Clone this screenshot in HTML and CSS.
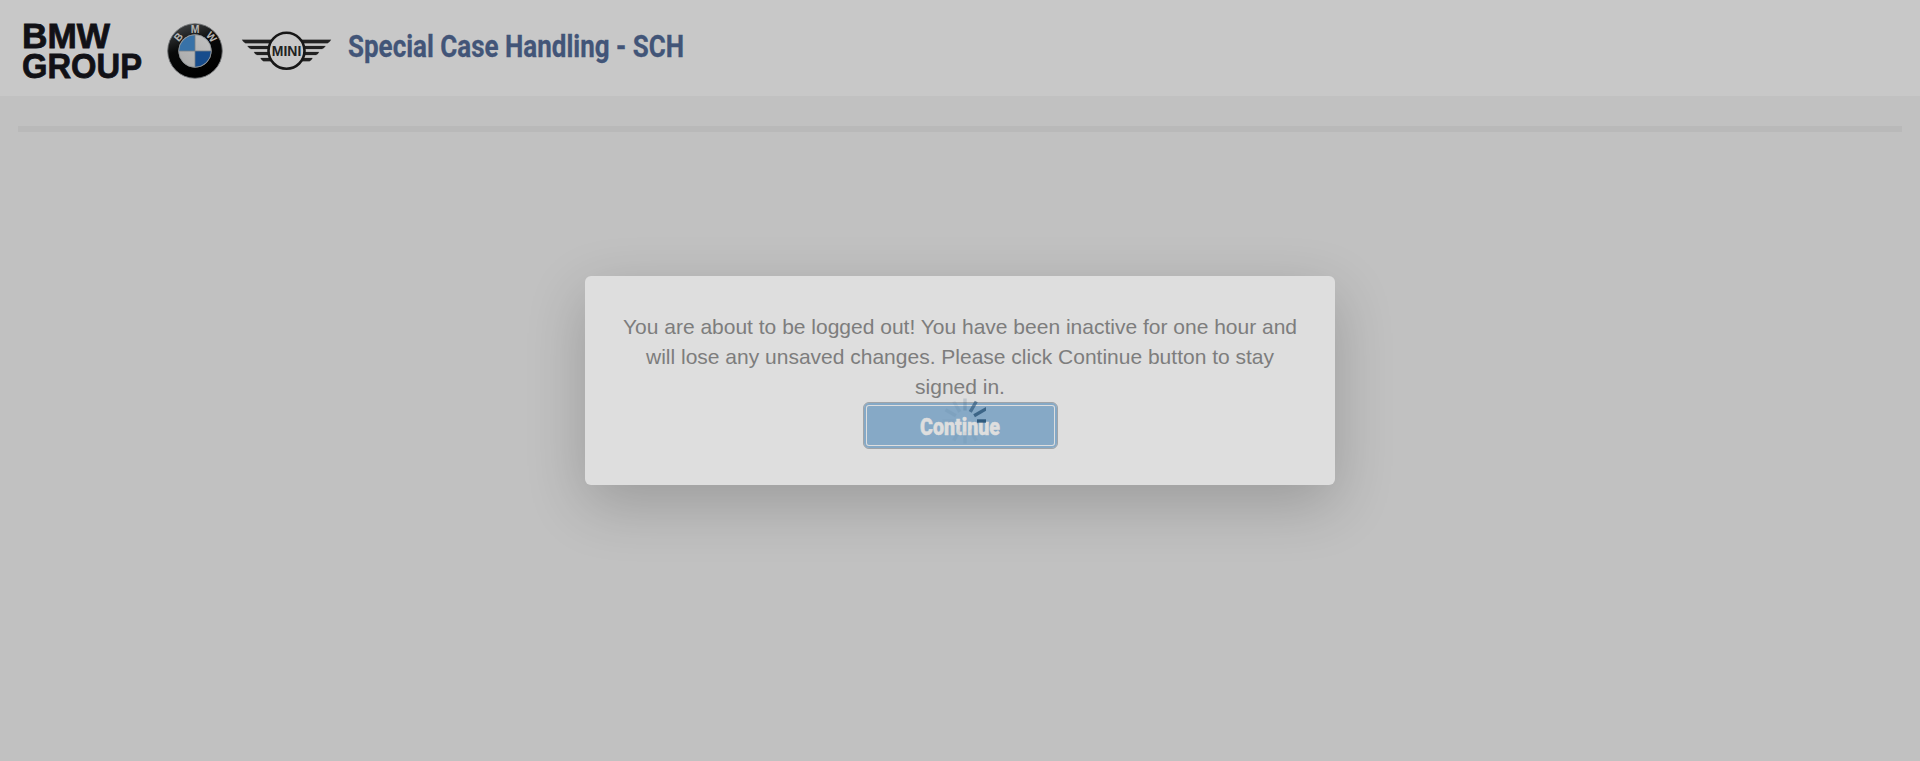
FILE: index.html
```html
<!DOCTYPE html>
<html lang="en">
<head>
<meta charset="utf-8">
<title>Special Case Handling - SCH</title>
<link rel="stylesheet" href="styles.css">
</head>
<body>
<header class="header">
  <svg class="logo-group" width="119" height="57" viewBox="0 0 119 57">
    <text x="-1" y="25" textLength="88" lengthAdjust="spacingAndGlyphs">BMW</text>
    <text x="-1" y="55" textLength="120" lengthAdjust="spacingAndGlyphs">GROUP</text>
  </svg>
  <svg class="logo-bmw" width="56" height="56" viewBox="0 0 56 56">
    <defs>
      <linearGradient id="ring" x1="0" y1="0" x2=".35" y2="1"><stop offset="0" stop-color="#4b4e50"/><stop offset=".5" stop-color="#080909"/><stop offset="1" stop-color="#000"/></linearGradient>
      <linearGradient id="silver" x1="0" y1="1" x2="1" y2="0"><stop offset="0" stop-color="#aaa"/><stop offset="1" stop-color="#c2c2c2"/></linearGradient>
    </defs>
    <circle cx="28" cy="28" r="27.3" fill="url(#ring)" stroke="#737577" stroke-width=".9"/>
    <circle cx="28" cy="28" r="16.5" fill="url(#silver)"/>
    <path d="M28 28V12A16 16 0 0 0 12 28Z" fill="#3872a8"/>
    <path d="M28 28H44A16 16 0 0 1 28 44Z" fill="#174c8c"/>
    <path d="M28 12V44M12 28H44" stroke="#777f85" stroke-width=".8"/>
    <circle cx="28" cy="28" r="16.3" fill="none" stroke="#8a9095" stroke-width=".8"/>
    <g class="ring-letters"><text x="28" y="10" transform="rotate(-50 28 28)">B</text><text x="28" y="10">M</text><text x="28" y="10" transform="rotate(50 28 28)">W</text></g>
  </svg>
  <svg class="logo-mini" width="90" height="42" viewBox="0 0 90 42">
    <g fill="#222" stroke="#222" stroke-width=".2">
      <path d="M0 1.800H31L28.500 5.200H3.500Q1.500 4.500 0 1.800ZM5.500 8H28L27 11H9Q7 10.300 5.500 8ZM12 14H27V17H15Q13 16.300 12 14ZM18.500 20H28L29 23.200H21.500Q19.500 22.500 18.500 20Z"/>
      <path d="M89 1.800H58L60.500 5.200H85.500Q87.500 4.500 89 1.800ZM83.500 8H61L62 11H80Q82 10.300 83.500 8ZM77 14H62V17H74Q76 16.300 77 14ZM70.500 20H61L60 23.200H67.500Q69.500 22.500 70.500 20Z"/>
    </g>
    <circle cx="44.500" cy="12.800" r="18" fill="#c8c8c8" stroke="#171717" stroke-width="2.600"/>
    <text x="29.800" y="18" textLength="29.500" lengthAdjust="spacingAndGlyphs">MINI</text>
  </svg>
  <svg class="title" width="340" height="48" viewBox="0 0 340 48"><text x="0" y="33.700" textLength="336" lengthAdjust="spacingAndGlyphs">Special Case Handling - SCH</text></svg>
</header>
<main class="content">
  <div class="divider"></div>
</main>
<div class="overlay">
  <section class="dialog">
    <p class="message">You are about to be logged out! You have been inactive for one hour and<br>will lose any unsaved changes. Please click Continue button to stay<br>signed in.</p>
    <button class="continue"><svg class="label" width="82" height="30" viewBox="0 0 82 30"><text x="1" y="23.500" textLength="80" lengthAdjust="spacingAndGlyphs">Continue</text></svg></button>
    <svg class="spinner" width="44" height="46" viewBox="-23 -23 44 46">
      <g stroke="#244f73" stroke-width="3.400">
        <path d="M0 -10.500V-22.500" opacity=".17"/>
        <path d="M0 -10.500V-22.500" transform="rotate(30)" opacity=".6"/>
        <path d="M0 -10.500V-25.500" transform="rotate(60)" opacity=".75"/>
        <path d="M0 -12V-22.500" transform="rotate(90)" opacity=".88"/>
        <path d="M0 -10.500V-22.500" transform="rotate(150)" opacity=".05"/>
        <path d="M0 -10.500V-22.500" transform="rotate(180)" opacity=".06"/>
        <path d="M0 -10.500V-22.500" transform="rotate(210)" opacity=".05"/>
        <path d="M0 -10.500V-22.500" transform="rotate(270)" opacity=".03"/>
        <path d="M0 -10.500V-22.500" transform="rotate(300)" opacity=".07"/>
        <path d="M0 -10.500V-22.500" transform="rotate(330)" opacity=".07"/>
      </g>
    </svg>
  </section>
</div>
</body>
</html>
```
FILE: styles.css
```css
* { box-sizing: border-box; }
body { margin: 0; height: 761px; overflow: hidden; background: #c1c1c1; font-family: "Liberation Sans", Arial, sans-serif; }
.header { height: 96px; background: #c8c8c8; display: flex; align-items: flex-start; padding: 23px 0 0 23px; }
.header svg { flex: none; overflow: visible; }
.logo-group { font: bold 35.5px "Liberation Sans", sans-serif; fill: #111116; stroke: #111116; stroke-width: .8px; }
.logo-bmw { margin-left: 25px; }
.ring-letters { font: bold 10.5px "Liberation Sans", sans-serif; fill: #b5b5b5; text-anchor: middle; }
.logo-mini { margin: 15px 0 0 19px; font: bold 15px "Liberation Sans", sans-serif; fill: #222; }
.title { margin: 0 0 0 16px; font: bold 30.5px Roboto, "Liberation Sans", sans-serif; fill: #425578; stroke: #425578; stroke-width: .3px; }
.content { padding: 30px 18px 0; }
.divider { height: 6px; background: #b9b9b9; }
.overlay { position: absolute; inset: 0; display: flex; justify-content: center; align-items: flex-start; padding-top: 276px; }
.dialog { position: relative; width: 750px; height: 209px; padding: 36px 30px 0; display: flex; flex-direction: column; align-items: center; background: #dedede; border-radius: 6px; box-shadow: 0 19px 60px rgba(0,0,0,.2); }
.message { margin: 0; font-size: 21px; line-height: 30px; text-align: center; white-space: nowrap; color: #7d7d7d; }
.continue { width: 195px; height: 47px; padding: 0; display: flex; align-items: center; justify-content: center; background: #86a9c6; border: 1px solid #a0a4a8; border-radius: 6px; box-shadow: inset 0 0 0 2px #86a9c6, inset 0 0 0 3px #dedede; }
.label { display: block; overflow: visible; font: 900 23.5px Roboto, "Liberation Sans", sans-serif; fill: #dedede; stroke: #dedede; stroke-width: .5px; }
.spinner { position: absolute; left: 357px; top: 122px; pointer-events: none; }
```
